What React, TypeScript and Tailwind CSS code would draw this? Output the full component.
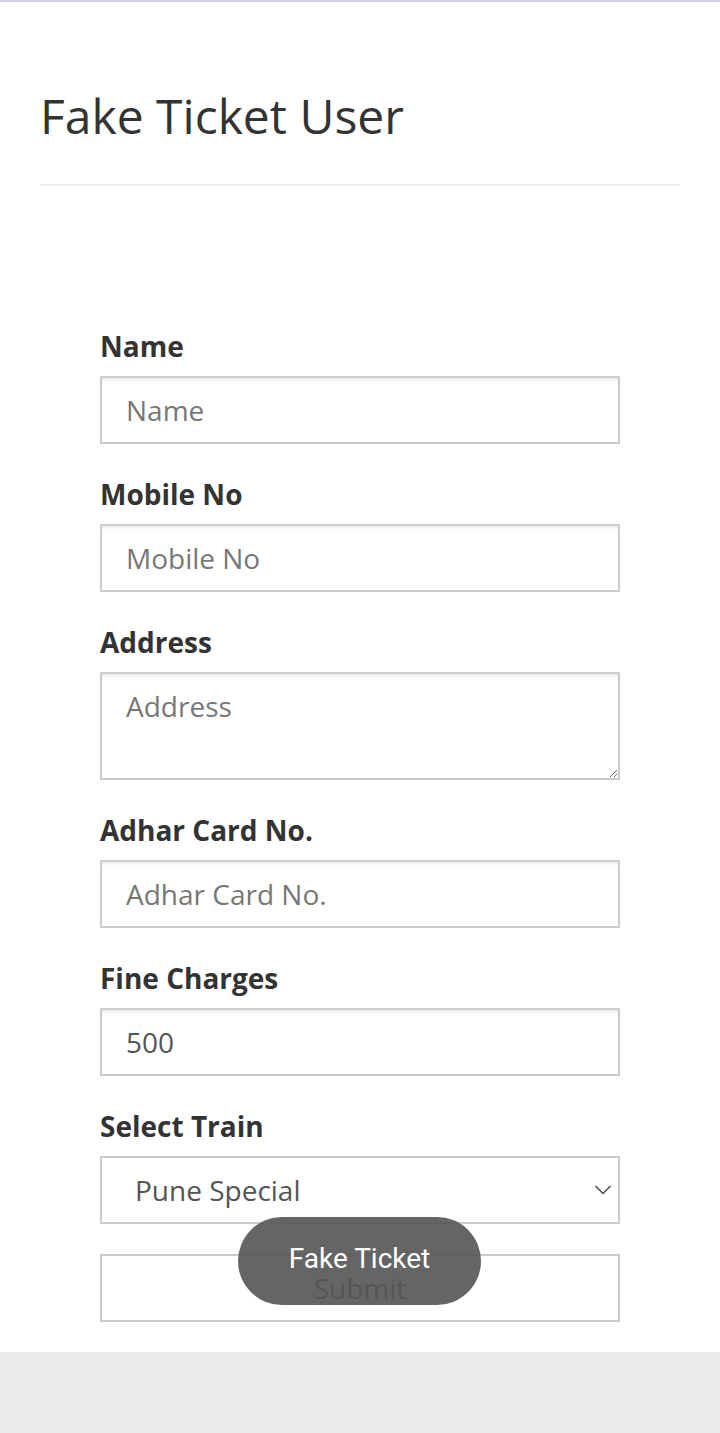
import { ChevronDown } from "lucide-react";

const fields = [
  { label: "Name", placeholder: "Name" },
  { label: "Mobile No", placeholder: "Mobile No" },
];

const Label = ({ children }: { children: string }) => (
  <label className="block text-[28px] font-bold leading-[40px] text-[#333] mb-[10px]">{children}</label>
);

const inputCls =
  "block w-full h-[68px] border-2 border-[#ccc] bg-white px-[24px] text-[28px] text-[#555] placeholder:text-[#777] outline-none shadow-[inset_0_2px_2px_rgba(0,0,0,0.075)]";

export default function App() {
  return (
    <div className="relative w-[720px] bg-white font-['Open_Sans',sans-serif] text-[#333]">
      <div className="h-[2px] bg-[#d6cce8]" />

      {/* Header */}
      <div className="px-[40px]">
        <div className="pt-[87px] pb-[41px] border-b-2 border-[#eee]">
          <h1 className="text-[48px] font-normal leading-[54px] text-[#333]">Fake Ticket User</h1>
        </div>
      </div>

      {/* Form */}
      <form className="px-[100px] pt-[140px] pb-[30px]">
        {fields.map((f) => (
          <div key={f.label} className="mb-[30px]">
            <Label>{f.label}</Label>
            <input readOnly placeholder={f.placeholder} className={inputCls} />
          </div>
        ))}

        <div className="mb-[30px]">
          <Label>Address</Label>
          <textarea
            readOnly
            placeholder="Address"
            className="block w-full h-[108px] border-2 border-[#ccc] bg-white px-[24px] pt-[12px] text-[28px] leading-[40px] text-[#555] placeholder:text-[#777] outline-none shadow-[inset_0_2px_2px_rgba(0,0,0,0.075)]"
          />
        </div>

        <div className="mb-[30px]">
          <Label>Adhar Card No.</Label>
          <input readOnly placeholder="Adhar Card No." className={inputCls} />
        </div>

        <div className="mb-[30px]">
          <Label>Fine Charges</Label>
          <input readOnly value="500" className={inputCls} />
        </div>

        <div className="mb-[30px]">
          <Label>Select Train</Label>
          <div className="flex items-center justify-between w-full h-[68px] border-2 border-[#ccc] bg-white pl-[33px] pr-[1px] text-[28px] text-[#555]">
            <span>Pune Special</span>
            <ChevronDown className="w-[28px] h-[28px] text-[#555]" strokeWidth={1.5} />
          </div>
        </div>

        <button
          type="button"
          className="block w-full h-[68px] border-2 border-[#ccc] bg-white text-[28px] text-[#333]"
        >
          Submit
        </button>
      </form>

      <div className="h-[81px] bg-[#ebebeb]" />

      {/* Toast */}
      <div className="absolute left-[238px] top-[1217px] flex h-[88px] w-[243px] items-center justify-center rounded-full bg-[rgba(88,88,88,0.92)] font-['Roboto',sans-serif] text-[28px] text-white">
        <span className="-mt-[4px]">Fake Ticket</span>
      </div>
    </div>
  );
}
